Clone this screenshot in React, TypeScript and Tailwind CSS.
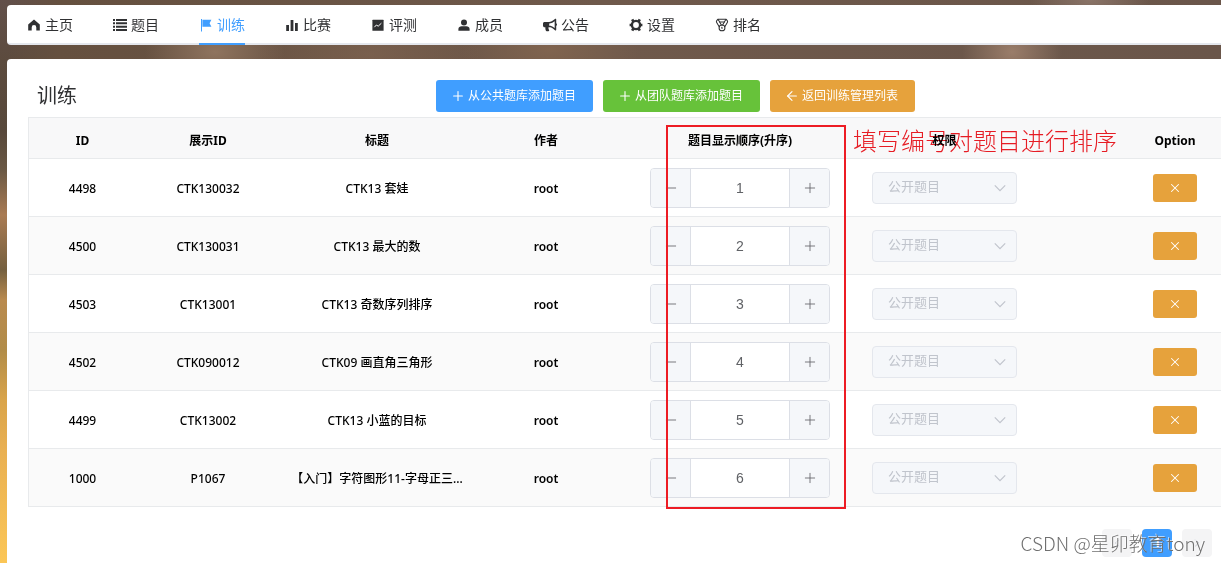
import React, { useState } from "react";
import { FaBullhorn } from "react-icons/fa";
import { Medal, Plus, Minus, X, ArrowLeft, ChevronLeft, ChevronRight } from "lucide-react";

const svg = "h-3.5 w-3.5";

const HomeIcon = () => (
  <svg viewBox="0 0 14 14" className={svg} fill="currentColor">
    <path d="M7 1.4 1.2 6.4v6.2h3.5V9.4a2.3 2.3 0 0 1 4.6 0v3.2h3.5V6.4z" />
  </svg>
);
const ListIcon = () => (
  <svg viewBox="0 0 14 14" className={svg} fill="currentColor">
    <path d="M0 1h2v2H0zM0 4.3h2v2H0zM0 7.7h2v2H0zM0 11h2v2H0zM3 1h11v2H3zM3 4.3h11v2H3zM3 7.7h11v2H3zM3 11h11v2H3z" />
  </svg>
);
const FlagIcon = () => (
  <svg viewBox="0 0 14 14" className={svg} fill="currentColor">
    <path d="M2 1h1v12.4H2zM3.4 1.8h9l-1.8 3.5 1.8 3.5h-9z" />
  </svg>
);
const BarsIcon = () => (
  <svg viewBox="0 0 14 14" className={svg} fill="currentColor">
    <path d="M1.2 7h2.8v6H1.2zM5.6 2h2.8v11H5.6zM10 5h2.8v8H10z" />
  </svg>
);
const TrendIcon = () => (
  <svg viewBox="0 0 14 14" className={svg}>
    <rect x="1.4" y="1.8" width="11.2" height="11" rx=".4" fill="currentColor" />
    <path d="m3.4 9.2 2-2.2 1.8 1.2 3.2-3" fill="none" stroke="#fff" strokeWidth="1" />
  </svg>
);
const UserIcon = () => (
  <svg viewBox="0 0 14 14" className={svg} fill="currentColor">
    <circle cx="7" cy="4.4" r="3" />
    <path d="M1.4 12.8V11c0-1.8 1.5-2.7 3.2-2.7h4.8c1.7 0 3.2.9 3.2 2.7v1.8z" />
  </svg>
);
const GearIcon = () => (
  <svg viewBox="0 0 14 14" className={svg} fill="none" stroke="currentColor">
    <circle cx="7" cy="7" r="4.1" strokeWidth="2.4" />
    <path d="M3.2 1.4l1.2 2.2M10.8 1.4 9.6 3.6M3.2 12.6l1.2-2.2M10.8 12.6l-1.2-2.2M.6 7h2M11.4 7h2" strokeWidth="2.6" />
  </svg>
);
const SelectArrow = () => (
  <svg
    viewBox="0 0 14 14"
    className="pointer-events-none absolute top-[9px] right-2.5 h-3.5 w-3.5 text-[#c0c4cc]"
    fill="none"
    stroke="currentColor"
    strokeWidth="1.2"
  >
    <path d="m1.8 4.4 5.2 5.2 5.2-5.2" />
  </svg>
);

const tabs = [
  { label: "主页", icon: <HomeIcon /> },
  { label: "题目", icon: <ListIcon /> },
  { label: "训练", icon: <FlagIcon />, active: true },
  { label: "比赛", icon: <BarsIcon /> },
  { label: "评测", icon: <TrendIcon /> },
  { label: "成员", icon: <UserIcon /> },
  { label: "公告", icon: <FaBullhorn className={svg} /> },
  { label: "设置", icon: <GearIcon /> },
  { label: "排名", icon: <Medal className={svg} strokeWidth={1.75} /> },
];

const problems = [
  { id: "4498", code: "CTK130032", title: "CTK13 套娃" },
  { id: "4500", code: "CTK130031", title: "CTK13 最大的数" },
  { id: "4503", code: "CTK13001", title: "CTK13 奇数序列排序" },
  { id: "4502", code: "CTK090012", title: "CTK09 画直角三角形" },
  { id: "4499", code: "CTK13002", title: "CTK13 小蓝的目标" },
  { id: "1000", code: "P1067", title: "【入门】字符图形11-字母正三..." },
];

function OrderInput({ initial, label }: { initial: number; label: string }) {
  const [value, setValue] = useState(initial);
  return (
    <div className="mx-auto flex h-10 w-[180px] overflow-hidden rounded border border-[#dcdfe6] bg-white text-[#606266]">
      <button
        type="button"
        aria-label="减少"
        onClick={() => setValue(value - 1)}
        className="flex w-10 shrink-0 items-center justify-center border-r border-[#dcdfe6] bg-[#f5f7fa]"
      >
        <Minus className="h-4 w-4" strokeWidth={1.25} />
      </button>
      <input
        aria-label={label}
        value={value}
        onChange={(e) => setValue(Number(e.target.value) || 0)}
        className="w-full min-w-0 text-center font-['Liberation_Sans',sans-serif] text-sm font-normal outline-none"
      />
      <button
        type="button"
        aria-label="增加"
        onClick={() => setValue(value + 1)}
        className="flex w-10 shrink-0 items-center justify-center border-l border-[#dcdfe6] bg-[#f5f7fa]"
      >
        <Plus className="h-4 w-4" strokeWidth={1.25} />
      </button>
    </div>
  );
}

const actionClass = "flex h-8 items-center gap-1 rounded-[3px] pr-[17px] pl-4 text-xs text-white";
const actionIcon = "h-3 w-3 scale-125";

export default function App() {
  return (
    <div className="min-h-screen overflow-hidden bg-[radial-gradient(70px_40px_at_215px_52px,#8f745f,transparent),radial-gradient(110px_40px_at_370px_54px,#87695480,transparent),radial-gradient(90px_40px_at_550px_50px,#80644f,transparent),radial-gradient(50px_40px_at_1012px_52px,#9a7d6a,transparent),radial-gradient(60px_30px_at_1090px_0px,#8a7468,transparent),linear-gradient(90deg,transparent_8px,#65503f_60px,#6f594b_600px,#6a564a_1221px),linear-gradient(#62504a_0px,#5c4b3e_60px,#57483b_130px,#6a5844_170px,#a97b53_215px,#75603f_270px,#b98a4e_300px,#b18c48_350px,#d9a44a_400px,#e9b052_450px,#fbc656_563px)] pt-[5px] pl-[7px] font-['Noto_Sans','Noto_Sans_CJK_SC',sans-serif] text-[#303133]">
      <nav className="flex h-10 items-stretch gap-10 rounded-l border-b-2 border-[#e4e7ed] bg-white pl-5">
        {tabs.map((t) => (
          <a
            key={t.label}
            href="#"
            className={
              t.active
                ? "-mb-0.5 flex items-center gap-1 border-b-2 border-[#409eff] pt-0.5 text-sm text-[#409eff]"
                : "-mb-0.5 flex items-center gap-1 border-b-2 border-transparent pt-0.5 text-sm"
            }
          >
            {t.icon}
            {t.label}
          </a>
        ))}
      </nav>

      <main className="mt-3.5 min-h-[504px] rounded-tl bg-white pt-[21px] pl-[21px]">
        <header className="flex h-8 items-center pl-[9px]">
          <h1 className="w-[399px] text-xl">训练</h1>
          <div className="flex gap-2.5">
            <button type="button" className={`${actionClass} bg-[#409eff]`}>
              <Plus className={actionIcon} strokeWidth={1.75} />
              从公共题库添加题目
            </button>
            <button type="button" className={`${actionClass} bg-[#67c23a]`}>
              <Plus className={actionIcon} strokeWidth={1.75} />
              从团队题库添加题目
            </button>
            <button type="button" className={`${actionClass} bg-[#e6a23c]`}>
              <ArrowLeft className={actionIcon} strokeWidth={1.75} />
              返回训练管理列表
            </button>
          </div>
        </header>

        <div className="relative mt-[5px]">
          <table className="w-full table-fixed border-separate border-spacing-0 border-t border-l border-[#e8eaec] text-center text-xs font-medium text-black">
            <colgroup>
              <col className="w-[107px]" />
              <col className="w-[144px]" />
              <col className="w-[194px]" />
              <col className="w-[144px]" />
              <col className="w-[244px]" />
              <col className="w-[165px]" />
              <col className="w-[194px]" />
            </colgroup>
            <thead className="bg-[#f8f8f9]">
              <tr className="h-[41px] [&>th]:border-b [&>th]:border-[#e8eaec] [&>th]:pt-1.5 [&>th]:font-bold">
                <th>ID</th>
                <th>展示ID</th>
                <th>标题</th>
                <th>作者</th>
                <th>题目显示顺序(升序)</th>
                <th>权限</th>
                <th className="pl-[102px]">Option</th>
              </tr>
            </thead>
            <tbody>
              {problems.map((p, i) => (
                <tr key={p.id} className="h-[58px] even:bg-[#fafafa] [&>td]:border-b [&>td]:border-[#e8eaec]">
                  <td className="pt-0.5">{p.id}</td>
                  <td className="pt-0.5">{p.code}</td>
                  <td className="px-2 pt-0.5 whitespace-nowrap">{p.title}</td>
                  <td className="pt-0.5 font-semibold">root</td>
                  <td>
                    <OrderInput initial={i + 1} label={`${p.id} 显示顺序`} />
                  </td>
                  <td className="px-2.5">
                    <div className="relative">
                      <select
                        disabled
                        aria-label={`${p.id} 权限`}
                        className="block h-8 w-full appearance-none rounded border border-[#e4e7ed] bg-[#f5f7fa] px-[15px] pb-0.5 text-[13px] font-normal text-[#c0c4cc] opacity-100"
                      >
                        <option>公开题目</option>
                      </select>
                      <SelectArrow />
                    </div>
                  </td>
                  <td className="pl-[102px]">
                    <button
                      type="button"
                      aria-label="移除"
                      className="mx-auto flex h-7 w-11 items-center justify-center rounded-[3px] bg-[#e6a23c] text-white"
                    >
                      <X className="h-3.5 w-3.5" strokeWidth={1.75} />
                    </button>
                  </td>
                </tr>
              ))}
            </tbody>
          </table>
          <div className="pointer-events-none absolute top-2 left-[638px] h-[384px] w-[180px] border-2 border-[#ed1c24]" />
          <p className="pointer-events-none absolute top-[7px] left-[825px] font-['Noto_Sans_CJK_SC',sans-serif] text-2xl leading-8 font-light whitespace-nowrap text-[#ed1c24] mix-blend-multiply">
            填写编号对题目进行排序
          </p>
        </div>

        <footer className="relative mt-[22px] flex justify-end gap-2.5 pr-[9px] text-[13px]">
          <button type="button" aria-label="上一页" className="flex h-7 w-[30px] items-center justify-center rounded-sm bg-[#f4f4f5] text-[#c0c4cc]">
            <ChevronLeft className="h-3 w-3" />
          </button>
          <button type="button" className="h-7 w-[30px] rounded-sm bg-[#409eff] font-bold text-white">
            1
          </button>
          <button type="button" aria-label="下一页" className="flex h-7 w-[30px] items-center justify-center rounded-sm bg-[#f4f4f5] text-[#c0c4cc]">
            <ChevronRight className="h-3 w-3" />
          </button>
          <span className="pointer-events-none absolute right-4 bottom-0 font-['Noto_Sans_CJK_SC',sans-serif] text-[19px] leading-7 font-light whitespace-nowrap text-[#707070] [text-shadow:-1px_-1px_0_rgba(255,255,255,0.6)]">
            CSDN @星卯教育tony
          </span>
        </footer>
      </main>
    </div>
  );
}
